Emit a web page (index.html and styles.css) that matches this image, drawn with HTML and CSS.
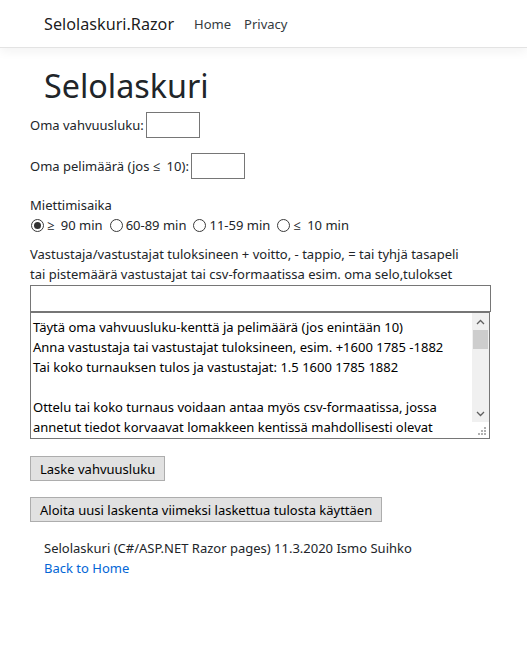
FILE: index.html
```html
<!DOCTYPE html>
<html lang="fi">
<head>
<meta charset="utf-8">
<title>Selolaskuri</title>
<link rel="stylesheet" href="styles.css">
</head>
<body>
<header class="navbar">
  <a class="brand" href="#">Selolaskuri.Razor</a>
  <nav class="nav">
    <a class="nav-link" href="#">Home</a>
    <a class="nav-link" href="#">Privacy</a>
  </nav>
</header>
<main class="main">
  <h1 class="title">Selolaskuri</h1>
  <form class="form">
    <div class="field field-first">
      <label class="field-label" for="selo">Oma vahvuusluku:</label>
      <input class="num-input" id="selo" type="text">
    </div>
    <div class="field field-second">
      <label class="field-label" for="pelit">Oma pelimäärä (jos <span class="sym">≤</span> 10):</label>
      <input class="num-input" id="pelit" type="text">
    </div>
    <div class="time-group">
      <div class="line">Miettimisaika</div>
      <div class="line radios">
        <input class="radio" type="radio" name="aika" id="a1" checked><label for="a1"><span class="sym">≥</span> 90 min</label>
        <input class="radio" type="radio" name="aika" id="a2"><label for="a2">60-89 min</label>
        <input class="radio" type="radio" name="aika" id="a3"><label for="a3">11-59 min</label>
        <input class="radio" type="radio" name="aika" id="a4"><label for="a4"><span class="sym">≤</span> 10 min</label>
      </div>
    </div>
    <div class="opp-label">
      <div class="line">Vastustaja/vastustajat tuloksineen + voitto, - tappio, = tai tyhjä tasapeli</div>
      <div class="line">tai pistemäärä vastustajat tai csv-formaatissa esim. oma selo,tulokset</div>
    </div>
    <input class="wide-input" type="text">
    <div class="area-wrap">
      <textarea class="help-area" readonly>Täytä oma vahvuusluku-kenttä ja pelimäärä (jos enintään 10)
Anna vastustaja tai vastustajat tuloksineen, esim. +1600 1785 -1882
Tai koko turnauksen tulos ja vastustajat: 1.5 1600 1785 1882

Ottelu tai koko turnaus voidaan antaa myös csv-formaatissa, jossa
annetut tiedot korvaavat lomakkeen kentissä mahdollisesti olevat
arvot. Esim. 1725,1,2,+1600 1785 -1882</textarea>
      <div class="scrollbar" aria-hidden="true">
        <div class="sb-arrow">
          <svg width="9" height="6" viewBox="0 0 9 6"><path d="M1 5 L4.5 1.5 L8 5" fill="none" stroke="#606060" stroke-width="1.3"/></svg>
        </div>
        <div class="sb-track"><div class="sb-thumb"></div></div>
        <div class="sb-arrow">
          <svg width="9" height="6" viewBox="0 0 9 6"><path d="M1 1 L4.5 4.5 L8 1" fill="none" stroke="#606060" stroke-width="1.3"/></svg>
        </div>
        <div class="sb-corner">
          <svg width="8" height="8" viewBox="0 0 8 8" fill="#b0b0b0"><rect x="6" y="0" width="2" height="2"/><rect x="3" y="3" width="2" height="2"/><rect x="6" y="3" width="2" height="2"/><rect x="0" y="6" width="2" height="2"/><rect x="3" y="6" width="2" height="2"/><rect x="6" y="6" width="2" height="2"/></svg>
        </div>
      </div>
    </div>
    <button class="btn btn-first" type="button">Laske vahvuusluku</button>
    <button class="btn btn-second" type="button">Aloita uusi laskenta viimeksi laskettua tulosta käyttäen</button>
  </form>
  <footer class="footer">
    <div class="line">Selolaskuri (C#/ASP.NET Razor pages) 11.3.2020 Ismo Suihko</div>
    <div class="line"><a class="home-link" href="#">Back to Home</a></div>
  </footer>
</main>
</body>
</html>
```
FILE: styles.css
```css
* { box-sizing: border-box; }
html, body { margin: 0; padding: 0; background: #fff; }
body {
  font-family: "Noto Sans", "Open Sans", sans-serif;
  font-size: 13px;
  line-height: 20px;
  color: #212529;
}
.navbar {
  height: 48px;
  border-bottom: 1px solid #e3e3e3;
  box-shadow: 0 4px 10px rgba(0,0,0,0.05);
  display: flex;
  align-items: center;
  padding-left: 44px;
}
.brand {
  font-size: 16.2px;
  color: rgba(0,0,0,0.9);
  text-decoration: none;
  margin-right: 20px;
}
.nav { display: flex; gap: 13px; }
.nav-link { color: #343a40; text-decoration: none; }
.main { display: flex; flex-direction: column; }
.title {
  margin: 0;
  margin-top: 18px;
  padding-left: 44px;
  font-size: 32.3px;
  font-weight: 400;
  line-height: 39px;
  color: #212529;
}
.form {
  display: flex;
  flex-direction: column;
  align-items: flex-start;
  padding-left: 30px;
}
.field { display: flex; align-items: center; height: 26px; }
.field-first { margin-top: 7px; }
.field-second { margin-top: 15px; }
.field-label { margin-right: 2px; }
.sym { display: inline-block; margin-right: 3px; }
.num-input {
  width: 54px;
  height: 26px;
  border: 1px solid #767676;
  margin: 0;
  font: inherit;
}
.time-group { margin-top: 16px; }
.line { height: 20px; white-space: nowrap; }
.radios { display: flex; align-items: center; }
.radio {
  appearance: none;
  -webkit-appearance: none;
  width: 13px;
  height: 13px;
  margin: 0 3px 0 1px;
  border: 1px solid #3a3a3a;
  border-radius: 50%;
  background: #fff;
  position: relative;
}
.radio:checked::after {
  content: "";
  position: absolute;
  left: 2px; top: 2px;
  width: 7px; height: 7px;
  border-radius: 50%;
  background: #333;
}
.radios label { margin-right: 6px; }
.opp-label { margin-top: 9px; }
.wide-input {
  margin-top: 1px;
  width: 461px;
  height: 27px;
  border: 1px solid #767676;
  font: inherit;
}
.area-wrap {
  position: relative;
  width: 460px;
  height: 127px;
}
.help-area {
  display: block;
  width: 460px;
  height: 127px;
  border: 1px solid #767676;
  padding: 4px 20px 0 2px;
  margin: 0;
  font: inherit;
  line-height: 20px;
  color: #000;
  resize: none;
  overflow: hidden;
}
.scrollbar {
  position: absolute;
  top: 1px;
  right: 1px;
  width: 17px;
  bottom: 1px;
  display: flex;
  flex-direction: column;
  background: #f0f0f0;
}
.sb-arrow {
  height: 17px;
  display: flex;
  align-items: center;
  justify-content: center;
}
.sb-track { height: 75px; }
.sb-thumb { margin: 0 1px; height: 19px; background: #cdcdcd; }
.sb-corner {
  flex: 1;
  background: #fff;
  display: flex;
  align-items: flex-end;
  justify-content: flex-end;
  padding: 0 3px 3px 0;
}
.btn {
  height: 25px;
  padding: 0 9px;
  border: 1px solid #adadad;
  background: #e1e1e1;
  font: inherit;
  color: #000;
  border-radius: 0;
}
.btn-first { margin-top: 17px; }
.btn-second { margin-top: 16px; }
.footer { padding-left: 44px; margin-top: 16px; }
.home-link { color: #0366d6; text-decoration: none; }
```
